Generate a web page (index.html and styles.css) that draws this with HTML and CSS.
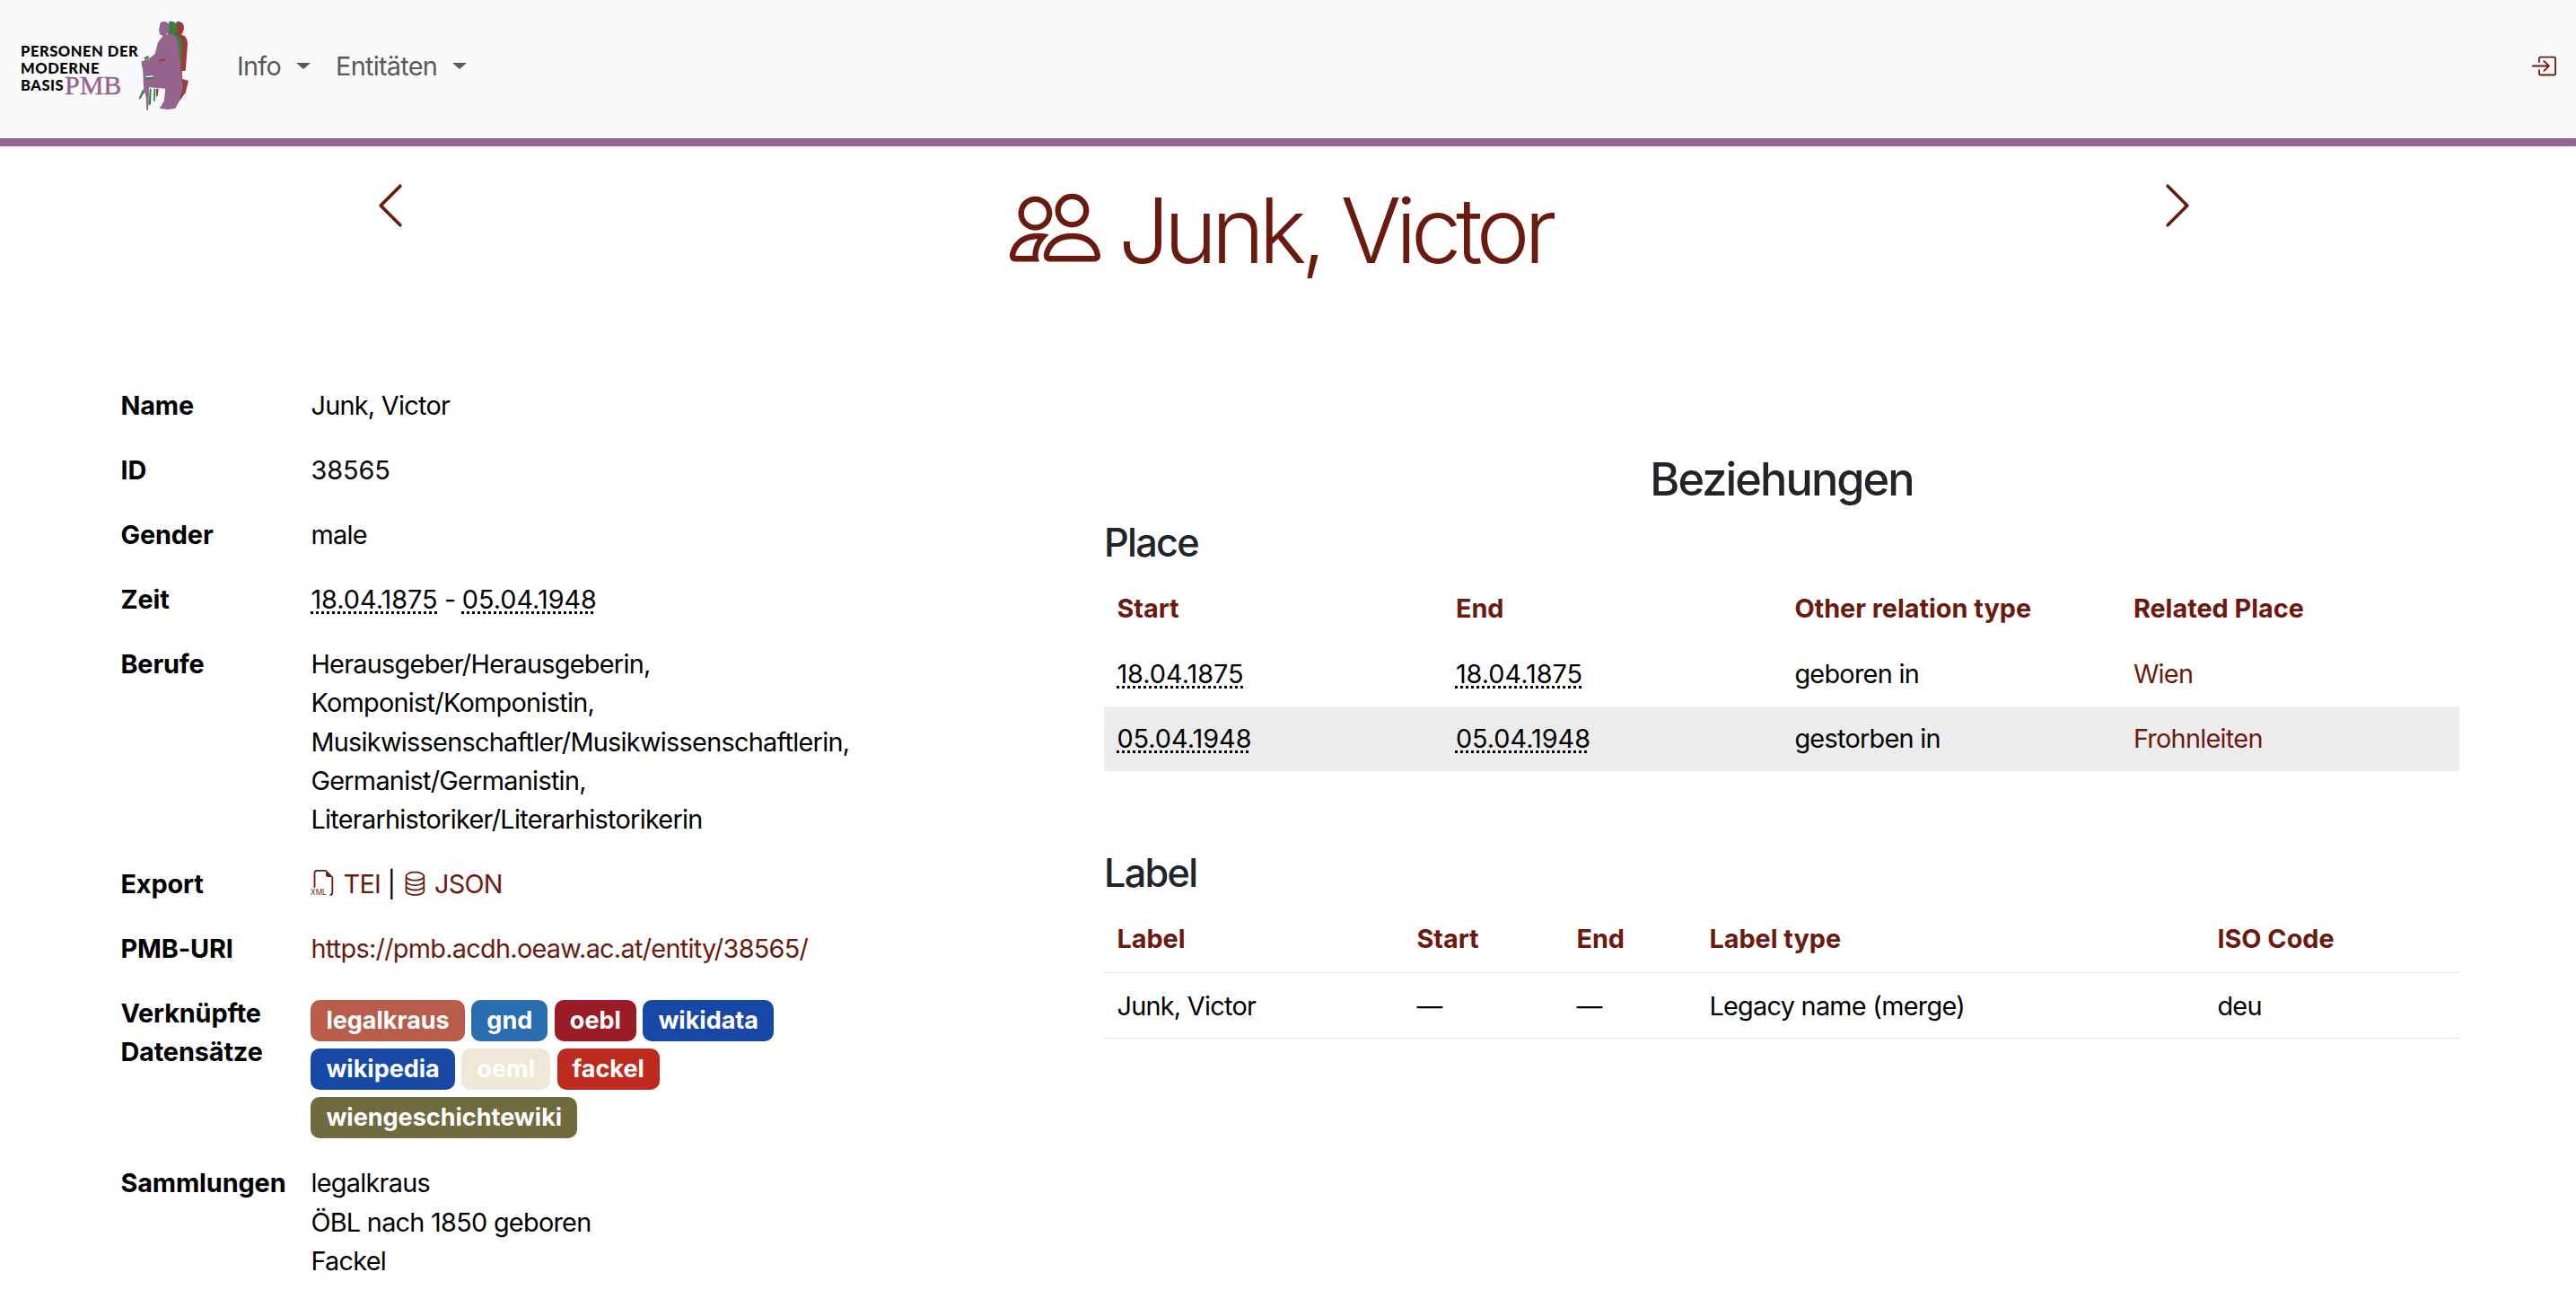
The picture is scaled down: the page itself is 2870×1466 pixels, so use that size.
FILE: index.html
```html
<!DOCTYPE html>
<html lang="de">
<head>
<meta charset="utf-8">
<title>Junk, Victor</title>
<link rel="stylesheet" href="styles.css">
</head>
<body>
<nav class="navbar">
  <a class="logo" href="#">
    <span class="logo-line logo-l1">PERSONEN DER</span>
    <span class="logo-line logo-l2">MODERNE</span>
    <span class="logo-line logo-l3">BASIS</span>
    <span class="logo-pmb">PMB</span>
    <svg class="logo-figure" viewBox="0 0 792 462">
      <path fill="#9c3b38" d="M590 72C605 70 615 78 615 92C615 102 610 110 606 116C620 118 628 130 627 150L620 236L608 238L610 264L630 270L620 310L598 340L585 362L560 362L560 300L590 220L580 120Z"/>
      <path fill="#3a8040" d="M565 72C580 68 592 76 592 92C592 102 588 110 585 116C600 118 607 130 608 150L606 210L598 236L600 290L590 340L560 362L534 362L550 335L553 300L585 220L560 120Z"/>
      <path fill="#3a8040" d="M478 298L464 328L468 332L484 306ZM500 296L506 296L504 350L497 350ZM514 296L520 296L518 338L513 338Z"/>
      <path fill="#9c3b38" d="M522 296L530 296L527 322L522 322Z"/>
      <path fill="#94648f" d="M536 76C545 70 560 70 565 84C568 96 562 108 556 116C572 108 586 118 592 132C598 165 604 210 606 250L611 292C606 320 596 345 585 362L562 366L534 362L548 345L553 296L498 292L497 340L495 368L490 368L488 325L480 296L478 240L472 206L498 196L518 180L528 142L545 120L535 116L531 100Z"/>
      <path fill="#f8f9fa" d="M486 255L512 253L512 257L487 259Z"/>
      <path fill="#3a8040" d="M487 259L514 257L514 264L487 266ZM482 192L496 186L498 194L484 200Z"/>
      <path fill="#9c3b38" d="M530 199L552 197L553 203L531 205Z"/>
    </svg>
  </a>
  <ul class="nav-menu">
    <li class="nav-item">Info</li>
    <li class="nav-item">Entitäten</li>
  </ul>
  <a class="login" href="#" aria-label="Login">
    <svg class="login-icon" viewBox="0 0 16 16" fill="currentColor">
      <path fill-rule="evenodd" d="M6 3.5a.5.5 0 0 1 .5-.5h8a.5.5 0 0 1 .5.5v9a.5.5 0 0 1-.5.5h-8a.5.5 0 0 1-.5-.5v-2a.5.5 0 0 0-1 0v2A1.5 1.5 0 0 0 6.5 14h8a1.5 1.5 0 0 0 1.5-1.5v-9A1.5 1.5 0 0 0 14.5 2h-8A1.5 1.5 0 0 0 5 3.5v2a.5.5 0 0 0 1 0v-2z"/>
      <path fill-rule="evenodd" d="M11.854 8.354a.5.5 0 0 0 0-.708l-3-3a.5.5 0 1 0-.708.708L10.293 7.5H1.5a.5.5 0 0 0 0 1h8.793l-2.147 2.146a.5.5 0 0 0 .708.708l3-3z"/>
    </svg>
  </a>
</nav>

<header class="title-row">
  <a class="pager" href="#" aria-label="Zurück">
    <svg viewBox="0 0 16 16" fill="currentColor"><path fill-rule="evenodd" d="M11.354 1.646a.5.5 0 0 1 0 .708L5.707 8l5.647 5.646a.5.5 0 0 1-.708.708l-6-6a.5.5 0 0 1 0-.708l6-6a.5.5 0 0 1 .708 0z"/></svg>
  </a>
  <h1 class="title">
    <svg class="title-icon" viewBox="0 0 16 16" fill="currentColor"><path d="M15 14s1 0 1-1-1-4-5-4-5 3-5 4 1 1 1 1h8Zm-7.978-1A.261.261 0 0 1 7 12.996c.001-.264.167-1.03.76-1.72C8.312 10.629 9.282 10 11 10c1.717 0 2.687.63 3.24 1.276.593.69.758 1.457.76 1.72l-.008.002a.274.274 0 0 1-.014.002H7.022ZM11 7a2 2 0 1 0 0-4 2 2 0 0 0 0 4Zm3-2a3 3 0 1 1-6 0 3 3 0 0 1 6 0ZM6.936 9.28a5.88 5.88 0 0 0-1.23-.247A7.35 7.35 0 0 0 5 9c-4 0-5 3-5 4 0 .667.333 1 1 1h4.216A2.238 2.238 0 0 1 5 13c0-1.01.377-2.042 1.09-2.904.243-.294.526-.569.846-.816ZM4.92 10A5.493 5.493 0 0 0 4 13H1c0-.26.164-1.03.76-1.724.545-.636 1.492-1.256 3.16-1.275ZM1.5 5.5a3 3 0 1 1 6 0 3 3 0 0 1-6 0Zm3-2a2 2 0 1 0 0 4 2 2 0 0 0 0-4Z"/></svg>
    <span>Junk, Victor</span>
  </h1>
  <a class="pager" href="#" aria-label="Weiter">
    <svg viewBox="0 0 16 16" fill="currentColor"><path fill-rule="evenodd" d="M4.646 1.646a.5.5 0 0 1 .708 0l6 6a.5.5 0 0 1 0 .708l-6 6a.5.5 0 0 1-.708-.708L10.293 8 4.646 2.354a.5.5 0 0 1 0-.708z"/></svg>
  </a>
</header>

<main class="content">
  <section class="details">
    <table class="detail-table">
      <tr><th>Name</th><td>Junk, Victor</td></tr>
      <tr><th>ID</th><td class="num">38565</td></tr>
      <tr><th>Gender</th><td>male</td></tr>
      <tr><th>Zeit</th><td><abbr title="1875-04-18">18.04.1875</abbr> - <abbr title="1948-04-05">05.04.1948</abbr></td></tr>
      <tr><th>Berufe</th><td>Herausgeber/Herausgeberin, Komponist/Komponistin, Musikwissenschaftler/Musikwissenschaftlerin, Germanist/Germanistin, Literarhistoriker/Literarhistorikerin</td></tr>
      <tr><th>Export</th><td>
        <a href="#"><svg class="inline-icon" viewBox="0 0 16 16"><path fill="currentColor" d="M14 4.5V14a2 2 0 0 1-2 2v-1a1 1 0 0 0 1-1V4.5h-2A1.5 1.5 0 0 1 9.5 3V1H4a1 1 0 0 0-1 1v9H2V2a2 2 0 0 1 2-2h5.5L14 4.5Z"/><text class="xml-text" x="0" y="15.3">XML</text></svg> TEI</a> | <a href="#"><svg class="inline-icon" viewBox="0 0 16 16" fill="currentColor"><path d="M4.318 2.687C5.234 2.271 6.536 2 8 2s2.766.27 3.682.687C12.644 3.125 13 3.627 13 4c0 .374-.356.875-1.318 1.313C10.766 5.729 9.464 6 8 6s-2.766-.27-3.682-.687C3.356 4.875 3 4.373 3 4c0-.374.356-.875 1.318-1.313ZM13 5.698V7c0 .374-.356.875-1.318 1.313C10.766 8.729 9.464 9 8 9s-2.766-.27-3.682-.687C3.356 7.875 3 7.373 3 7V5.698c.271.202.58.378.904.525C4.978 6.711 6.427 7 8 7s3.022-.289 4.096-.777A4.92 4.92 0 0 0 13 5.698ZM14 4c0-1.007-.875-1.755-1.904-2.223C11.022 1.289 9.573 1 8 1s-3.022.289-4.096.777C2.875 2.245 2 2.993 2 4v9c0 1.007.875 1.755 1.904 2.223C4.978 15.71 6.427 16 8 16s3.022-.289 4.096-.777C13.125 14.755 14 14.007 14 13V4Zm-1 4.698V10c0 .374-.356.875-1.318 1.313C10.766 11.729 9.464 12 8 12s-2.766-.27-3.682-.687C3.356 10.875 3 10.373 3 10V8.698c.271.202.58.378.904.525C4.978 9.71 6.427 10 8 10s3.022-.289 4.096-.777A4.92 4.92 0 0 0 13 8.698Zm0 3V13c0 .374-.356.875-1.318 1.313C10.766 14.729 9.464 15 8 15s-2.766-.27-3.682-.687C3.356 13.875 3 13.373 3 13v-1.302c.271.202.58.378.904.525C4.978 12.71 6.427 13 8 13s3.022-.289 4.096-.777c.324-.147.633-.323.904-.525Z"/></svg> JSON</a>
      </td></tr>
      <tr><th>PMB-URI</th><td><a href="#">https://pmb.acdh.oeaw.ac.at/entity/38565/</a></td></tr>
      <tr><th>Verknüpfte Datensätze</th><td class="badge-cell">
        <div class="badges">
          <a class="badge b-legalkraus" href="#">legalkraus</a>
          <a class="badge b-gnd" href="#">gnd</a>
          <a class="badge b-oebl" href="#">oebl</a>
          <a class="badge b-wiki" href="#">wikidata</a>
          <a class="badge b-wiki" href="#">wikipedia</a>
          <a class="badge b-oeml" href="#">oeml</a>
          <a class="badge b-fackel" href="#">fackel</a>
          <a class="badge b-wgw" href="#">wiengeschichtewiki</a>
        </div>
      </td></tr>
      <tr><th>Sammlungen</th><td>legalkraus<br>ÖBL nach 1850 geboren<br>Fackel</td></tr>
    </table>
  </section>

  <section class="relations">
    <h2 class="relations-title">Beziehungen</h2>
    <h3 class="relation-head">Place</h3>
    <table class="rel-table striped">
      <thead><tr><th>Start</th><th>End</th><th>Other relation type</th><th>Related Place</th></tr></thead>
      <tbody>
        <tr><td><abbr title="1875-04-18">18.04.1875</abbr></td><td><abbr title="1875-04-18">18.04.1875</abbr></td><td>geboren in</td><td><a href="#">Wien</a></td></tr>
        <tr class="row-alt"><td><abbr title="1948-04-05">05.04.1948</abbr></td><td><abbr title="1948-04-05">05.04.1948</abbr></td><td>gestorben in</td><td><a href="#">Frohnleiten</a></td></tr>
      </tbody>
    </table>
    <h3 class="relation-head label-head">Label</h3>
    <table class="rel-table lined">
      <colgroup><col class="c-label"><col class="c-start"><col class="c-end"><col class="c-type"><col class="c-iso"></colgroup>
      <thead><tr><th>Label</th><th>Start</th><th>End</th><th>Label type</th><th>ISO Code</th></tr></thead>
      <tbody><tr><td>Junk, Victor</td><td>—</td><td>—</td><td>Legacy name (merge)</td><td>deu</td></tr></tbody>
    </table>
  </section>
</main>
</body>
</html>
```
FILE: styles.css
```css
* { box-sizing: border-box; }
html, body { margin: 0; padding: 0; }
body {
  font-family: Inter, "Liberation Sans", sans-serif;
  font-size: 28.8px;
  line-height: 1.5;
  letter-spacing: -.7px;
  color: #000;
  background: #fff;
  height: 1466px;
  overflow: hidden;
}
a { color: #6b1a10; text-decoration: none; }
abbr { letter-spacing: 0; text-decoration: underline dotted; text-underline-offset: 3px; }
.num { letter-spacing: 0; }

.navbar {
  display: flex;
  align-items: center;
  height: 163px;
  background: #f8f9fa;
  border-bottom: 9px solid #94648f;
  padding: 0 22px 7px 0;
}
.logo {
  position: relative;
  display: block;
  align-self: flex-start;
  width: 264px;
  height: 154px;
  flex: none;
  color: #000;
  letter-spacing: 0;
}
.logo-line {
  position: absolute;
  left: 23px;
  font-family: Lato, Inter, sans-serif;
  font-size: 16.5px;
  line-height: 15px;
  font-weight: 900;
  letter-spacing: .55px;
  white-space: nowrap;
}
.logo-l1 { top: 50px; }
.logo-l2 { top: 69px; }
.logo-l3 { top: 88px; }
.logo-pmb {
  position: absolute;
  left: 72px;
  top: 84px;
  font-family: "Liberation Serif", serif;
  font-size: 30px;
  line-height: 22px;
  color: #94648f;
  -webkit-text-stroke: .4px #94648f;
}
.logo-figure {
  position: absolute;
  left: 0;
  top: 0;
  width: 264px;
  height: 154px;
}
.nav-menu {
  display: flex;
  gap: 28px;
  list-style: none;
  margin: 0;
  padding: 0;
  flex: 1;
  color: #595959;
}
.nav-item { display: flex; align-items: center; }
.nav-item::after {
  content: "";
  margin-left: 17px;
  border-top: 7px solid #595959;
  border-left: 8px solid transparent;
  border-right: 8px solid transparent;
}
.login { display: block; color: #6b1a10; height: 29px; }
.login-icon { display: block; width: 29px; height: 29px; }

.title-row {
  display: flex;
  justify-content: space-between;
  align-items: flex-start;
  width: 2858px;
  height: 253px;
  padding: 37px 403px 0 406px;
}
.pager { display: block; width: 58px; height: 58px; color: #6b1a10; }
.pager svg { display: block; width: 58px; height: 58px; }
.title {
  display: flex;
  align-items: center;
  gap: 20px;
  margin: -4px 8px 0 0;
  font-size: 100.8px;
  font-weight: 300;
  line-height: 1.2;
  color: #6b1a10;
  letter-spacing: -6.4px;
  white-space: nowrap;
}
.title-icon { width: 101px; height: 101px; flex: none; margin-top: -5px; }

.content {
  display: grid;
  grid-template-columns: 880px 1510px;
  column-gap: 230px;
  padding-left: 120px;
}
.detail-table { border-collapse: collapse; width: 100%; table-layout: fixed; }
.detail-table th, .detail-table td {
  padding: 14.4px;
  text-align: left;
  vertical-align: top;
}
.detail-table th { font-weight: 700; width: 212px; letter-spacing: -.1px; }
.inline-icon { width: 28.8px; height: 28.8px; vertical-align: -3px; color: #6b1a10; overflow: visible; }
.xml-text { font-size: 4.6px; fill: currentColor; font-family: Inter, sans-serif; letter-spacing: 0; }

.detail-table .badge-cell { padding-top: 21px; }
.badges { display: flex; flex-wrap: wrap; gap: 8px 7.6px; padding-right: 120px; letter-spacing: 0; }
.badge {
  display: block;
  height: 46px;
  padding: 0 17px;
  border-radius: 10px;
  font-size: 27px;
  font-weight: 700;
  line-height: 45px;
  color: #fff;
}
.b-legalkraus { background: #b85c4b; }
.b-gnd { background: #2a6db0; }
.b-oebl { background: #9a1c26; }
.b-wiki { background: #1748a5; }
.b-oeml { background: #efe8d8; }
.b-fackel { background: #bd2b1e; }
.b-wgw { background: #6f6b3f; }

.relations { padding-top: 88px; }
.relations-title {
  margin: 0 0 14.4px;
  font-size: 50.4px;
  font-weight: 500;
  line-height: 1.2;
  text-align: center;
  color: #212529;
  letter-spacing: -1.9px;
}
.relation-head {
  margin: 0 0 12.4px;
  font-size: 43.2px;
  font-weight: 500;
  line-height: 1.2;
  color: #212529;
  letter-spacing: -1.7px;
}
.label-head { margin-top: 88px; }
.rel-table { border-collapse: collapse; width: 100%; table-layout: fixed; }
.rel-table th, .rel-table td {
  padding: 14.4px;
  text-align: left;
}
.rel-table th { font-weight: 700; color: #6b1a10; letter-spacing: 0; padding: 13px 14.4px 15.8px; }
.row-alt td { background: #ececec; }
.lined tr { border-bottom: 1px solid #dee2e6; }
.c-label { width: 334px; }
.c-start { width: 178px; }
.c-end { width: 148px; }
.c-type { width: 566px; }
.c-iso { width: 284px; }
```
